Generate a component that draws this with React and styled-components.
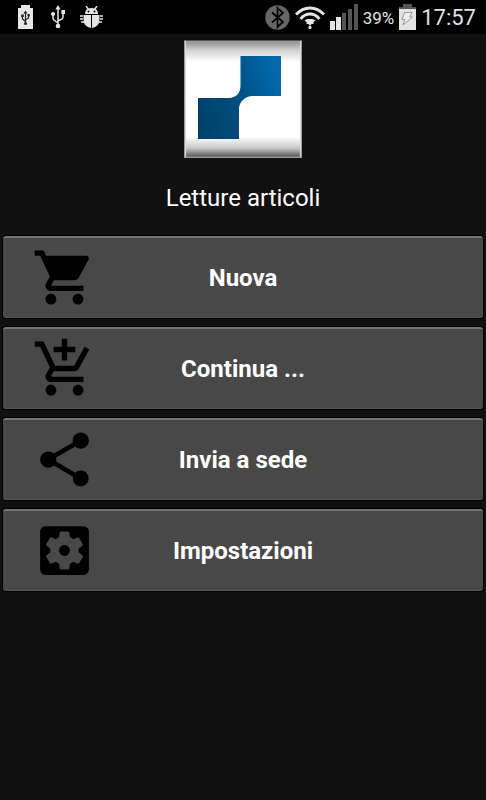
import React from 'react';
import styled, { createGlobalStyle } from 'styled-components';
import {
  MdShoppingCart,
  MdAddShoppingCart,
  MdShare,
} from 'react-icons/md';

const GlobalStyle = createGlobalStyle`
  * {
    box-sizing: border-box;
  }
  body {
    margin: 0;
    background: #111111;
    color: #ffffff;
    font-family: Roboto, 'Liberation Sans', sans-serif;
  }
`;

const StatusBar = styled.header`
  display: flex;
  justify-content: space-between;
  align-items: center;
  height: 34px;
  padding: 0 10px 0 18px;
  background: #000000;
  color: #e2e2e2;

  svg {
    display: block;
    flex: none;
  }
`;

const Notifications = styled.div`
  display: flex;
  align-items: center;
  gap: 15px;
`;

const Indicators = styled.div`
  display: flex;
  align-items: center;
  gap: 5px;
`;

const BatteryLevel = styled.span`
  padding-top: 2px;
  font-size: 17px;
  line-height: 24px;
`;

const Clock = styled.time`
  padding-top: 2px;
  font-size: 22px;
  line-height: 32px;
`;

const Content = styled.main`
  display: flex;
  flex-direction: column;
  align-items: center;
  padding: 6px 3px;
`;

const LogoTile = styled.div`
  width: 118px;
  height: 118px;
  border: 1px solid #9a9a9a;
  border-top-color: #555555;
  background: linear-gradient(
    to bottom,
    #8c8c8c 0,
    #d0d0d0 9px,
    #ffffff 21px,
    #ffffff 96px,
    #c8c8c8 107px,
    #555555 116px
  );
  box-shadow: inset 1px 0 1px #dddddd, inset -1px 0 1px #dddddd;

  svg {
    display: block;
    margin: -1px;
  }
`;

const Title = styled.h1`
  margin: 25px 0 23px;
  font-size: 24px;
  line-height: 30px;
  font-weight: 400;
`;

const Menu = styled.nav`
  display: flex;
  flex-direction: column;
  gap: 9px;
  width: 100%;
`;

const MenuButton = styled.button`
  display: grid;
  grid-template-columns: 65px 1fr 65px;
  align-items: center;
  width: 100%;
  height: 82px;
  padding: 0 29px;
  border: 0;
  border-top: 2px solid #747474;
  border-bottom: 1px solid #555555;
  border-radius: 3px;
  background: #484848;
  box-shadow: 0 0 0 1px #000000;
  color: #ffffff;
  font-family: inherit;
  font-size: 24px;
  line-height: 30px;
  font-weight: 700;
  cursor: pointer;

  svg {
    color: #000000;
  }

  &:active {
    background: #5a5a5a;
  }
`;

const BatteryUsbIcon = () => (
  <svg width="18" height="24" viewBox="0 0 18 24" aria-hidden="true">
    <path d="M3 0h9v3h3v21H0V3h3z" fill="#e6e6e6" />
    <path d="M7.5 7v12M4.5 11v3l3 2.500M10.500 10v3l-3 2" fill="none" stroke="#222" strokeWidth="1.2" />
    <path d="M7.5 5.5l2 3h-4zM3.200 9.500h2.600V12H3.200zM9.500 9h2.300v2.300H9.500z" fill="#222" />
    <circle cx="7.5" cy="18.5" r="1.5" fill="#222" />
  </svg>
);

const UsbIcon = () => (
  <svg width="14" height="24" viewBox="0 0 14 24" aria-hidden="true">
    <path d="M7 3v17M2 9v4q0 1 1 2l4 3M12 8v4q0 1-1 2l-4 2" fill="none" stroke="#e6e6e6" strokeWidth="1.5" />
    <path d="M7 0l2.600 4.500H4.400zM10.400 5H14v4h-3.600z" fill="#e6e6e6" />
    <circle cx="2" cy="9" r="2" fill="#e6e6e6" />
    <circle cx="7" cy="21" r="2.3" fill="#e6e6e6" />
  </svg>
);

const BugIcon = () => (
  <svg width="23" height="22" viewBox="0 0 23 22" aria-hidden="true">
    <path d="M6 0l2.500 3.500M17 0l-2.500 3.500" stroke="#e6e6e6" strokeWidth="1.4" />
    <path d="M5 8q0-6 6.500-6T18 8z" fill="#e6e6e6" />
    <circle cx="8.5" cy="5.5" r="1" fill="#000" />
    <circle cx="14.5" cy="5.5" r="1" fill="#000" />
    <path d="M3.500 9h7.500v13Q3.500 21 3.500 13zM19.500 9H12v13q7.500-1 7.500-9z" fill="#e6e6e6" />
    <path d="M0 10h3M0 13h3M1 16h3M20 10h3M20 13h3M19 16h3" stroke="#e6e6e6" strokeWidth="1.6" />
  </svg>
);

const BluetoothIcon = () => (
  <svg width="25" height="25" viewBox="0 0 25 25" aria-hidden="true">
    <circle cx="12.5" cy="12.5" r="12.2" fill="#666666" />
    <path d="M7 7.500l11 9.500-5.500 5V3L18 8 7 17.500" fill="none" stroke="#000" strokeWidth="1.7" />
  </svg>
);

const WifiIcon = () => (
  <svg width="30" height="24" viewBox="0 0 30 24" aria-hidden="true">
    <g fill="none" stroke="#e6e6e6" strokeWidth="2.8">
      <path d="M1 9.500Q7 3 15 3t14 6.500" />
      <path d="M5.500 14Q9.500 9 15 9t9.500 5" />
    </g>
    <path d="M9.500 15.500l3-1.500h5l3 1.500-2 1.500v2h-2L15 21l-1.500-2h-2v-2z" fill="#e6e6e6" />
    <circle cx="15" cy="22.4" r="1.6" fill="#e6e6e6" />
  </svg>
);

const SignalIcon = () => (
  <svg width="28" height="26" viewBox="0 0 28 26" aria-hidden="true">
    <path d="M0 17h5v9H0zM6 13h5v13H6z" fill="#e6e6e6" />
    <path d="M12 9h4v17h-4zM18 5h4v21h-4zM24 0h4v26h-4z" fill="#555555" />
  </svg>
);

const ChargingIcon = () => (
  <svg width="17" height="26" viewBox="0 0 17 26" aria-hidden="true">
    <path d="M4 0h9v3h4v3H0V3h4z" fill="#555555" />
    <path d="M0 5h17v21H0z" fill="#e2e2e2" />
    <path d="M5.500 8.500H13l-2.500 4.500h3L4 21l2-5.500H3z" fill="#eeeeee" stroke="#999999" />
  </svg>
);

const Logo = () => (
  <svg width="118" height="118" viewBox="0 0 118 118" role="img" aria-label="Logo">
    <defs>
      <linearGradient id="logoBlue" x1="0" y1="0.7" x2="1" y2="0.4">
        <stop offset="0" stopColor="#00416b" />
        <stop offset="0.5" stopColor="#004f80" />
        <stop offset="1" stopColor="#006aad" />
      </linearGradient>
    </defs>
    <path
      d="M56.500 16H97V56H69C61 56 55 62 55 69V99H14V58H45C52 58 56.500 53 56.500 46Z"
      fill="url(#logoBlue)"
    />
  </svg>
);

// boxed gear with a solid hub
const SettingsIcon = () => (
  <svg width="65" height="65" viewBox="0 0 24 24" fill="currentColor" aria-hidden="true">
    <path d="M12 10c-1.100 0-2 .9-2 2s.9 2 2 2 2-.9 2-2-.9-2-2-2zm7-7H5c-1.110 0-2 .9-2 2v14c0 1.100.890 2 2 2h14c1.110 0 2-.9 2-2V5c0-1.100-.890-2-2-2zm-1.750 9c0 .230-.020.460-.050.680l1.480 1.160c.130.110.170.300.080.450l-1.400 2.420c-.090.150-.270.210-.430.150l-1.740-.7c-.360.280-.760.510-1.180.690l-.260 1.850c-.030.170-.180.300-.350.300h-2.800c-.170 0-.320-.130-.350-.290l-.260-1.850c-.430-.180-.820-.410-1.180-.690l-1.740.7c-.160.060-.340 0-.430-.150l-1.400-2.420c-.090-.150-.050-.340.080-.450l1.480-1.160c-.030-.230-.050-.460-.050-.690 0-.230.020-.460.050-.680l-1.480-1.160c-.130-.110-.170-.300-.080-.450l1.400-2.420c.090-.150.270-.210.430-.150l1.740.7c.360-.280.760-.510 1.180-.690l.260-1.850c.030-.170.180-.300.350-.300h2.800c.170 0 .320.130.350.290l.260 1.850c.430.180.820.410 1.180.690l1.740-.7c.160-.060.340 0 .430.150l1.400 2.420c.090.150.050.340-.080.450l-1.480 1.160c.030.230.050.460.050.690z" />
  </svg>
);

const items = [
  { label: 'Nuova', Icon: MdShoppingCart },
  { label: 'Continua ...', Icon: MdAddShoppingCart },
  { label: 'Invia a sede', Icon: MdShare },
  { label: 'Impostazioni', Icon: SettingsIcon },
];

function App() {
  return (
    <>
      <GlobalStyle />
      <StatusBar>
        <Notifications>
          <BatteryUsbIcon />
          <UsbIcon />
          <BugIcon />
        </Notifications>
        <Indicators>
          <BluetoothIcon />
          <WifiIcon />
          <SignalIcon />
          <BatteryLevel>39%</BatteryLevel>
          <ChargingIcon />
          <Clock>17:57</Clock>
        </Indicators>
      </StatusBar>
      <Content>
        <LogoTile>
          <Logo />
        </LogoTile>
        <Title>Letture articoli</Title>
        <Menu>
          {items.map(({ label, Icon }) => (
            <MenuButton key={label} type="button">
              <Icon size={65} />
              <span>{label}</span>
            </MenuButton>
          ))}
        </Menu>
      </Content>
    </>
  );
}

export default App;
